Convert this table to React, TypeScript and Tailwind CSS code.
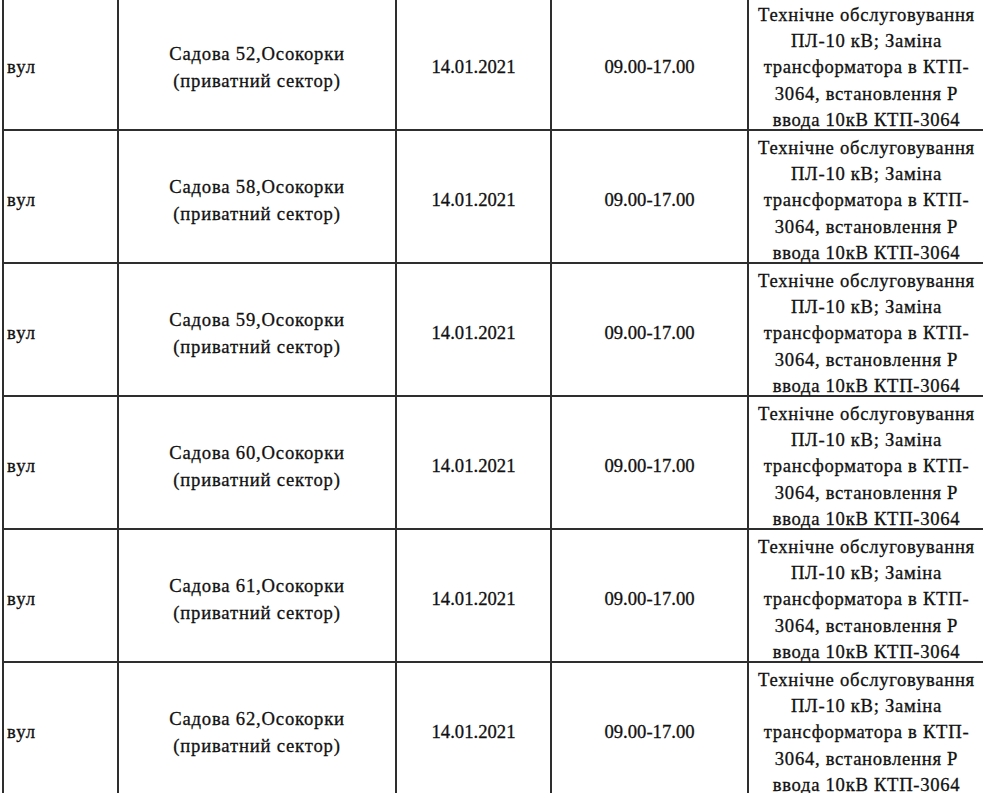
import React from "react";

const rows = ["52", "58", "59", "60", "61", "62"];

const cell =
  "h-[133px] pt-[8px] border-r-2 border-b-2 border-[#2e2e2e] flex items-center text-[#111]";

export default function App() {
  return (
    <div className="w-[983px] h-[793px] overflow-hidden bg-white font-['Liberation_Serif','Times_New_Roman',serif] [-webkit-text-stroke:0.3px_#111]">
      <div className="-mt-[4px] ml-[2px] w-[984px] grid grid-cols-[115px_278px_155px_197px_237px] border-l-2 border-t-2 border-[#2e2e2e] text-[18.67px] leading-[26.2px]">
        {rows.map((n) => (
          <React.Fragment key={n}>
            <div className={`${cell} pl-[3px] tracking-[1px]`}>вул</div>
            <div className={`${cell} justify-center text-center tracking-[0.8px] whitespace-nowrap`}>
              <div>
                <div>Садова {n},Осокорки</div>
                <div>(приватний сектор)</div>
              </div>
            </div>
            <div className={`${cell} justify-center`}>14.01.2021</div>
            <div className={`${cell} justify-center`}>09.00-17.00</div>
            <div className={`${cell} justify-center text-center whitespace-nowrap tracking-[0.7px]`}>
              <div>
                <div>Технічне обслуговування</div>
                <div>ПЛ-10 кВ; Заміна</div>
                <div>трансформатора в КТП-</div>
                <div>3064, встановлення Р</div>
                <div>ввода 10кВ КТП-3064</div>
              </div>
            </div>
          </React.Fragment>
        ))}
      </div>
    </div>
  );
}
